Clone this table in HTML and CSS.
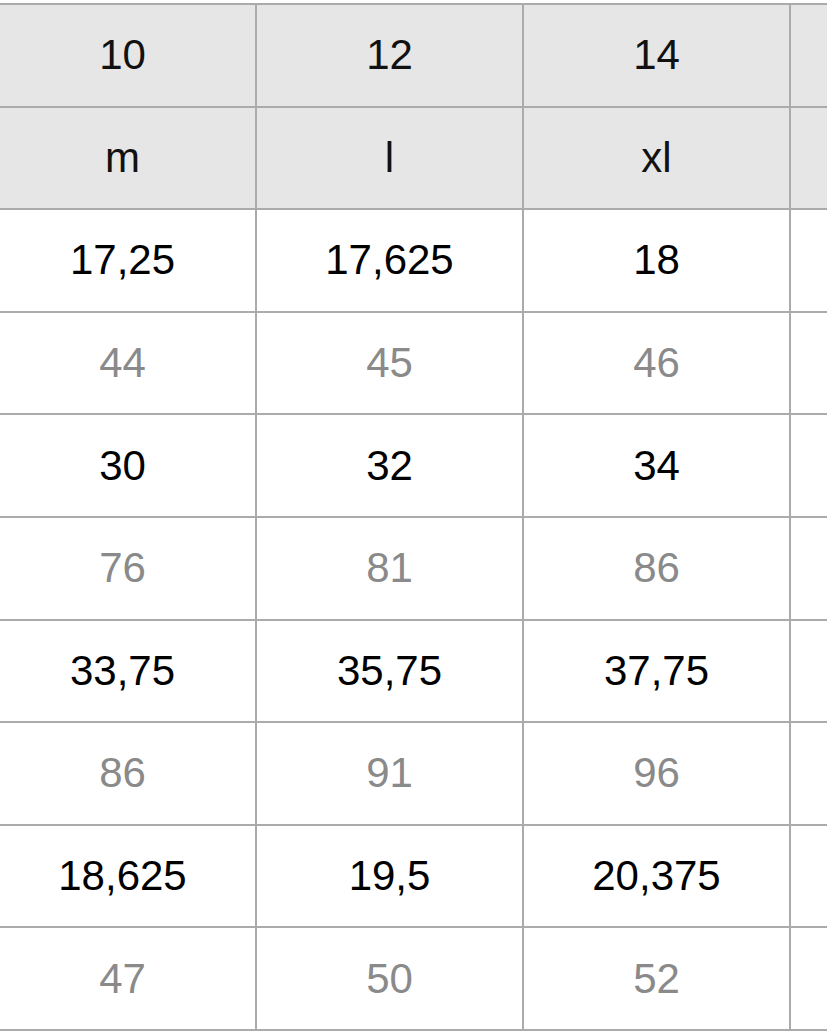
FILE: index.html
```html
<!DOCTYPE html>
<html>
<head>
<meta charset="utf-8">
<link rel="stylesheet" href="styles.css">
</head>
<body>
<table class="size-table">
  <thead>
    <tr><th>10</th><th>12</th><th>14</th><th></th></tr>
    <tr><th>m</th><th>l</th><th>xl</th><th></th></tr>
  </thead>
  <tbody>
    <tr class="dark"><td>17,25</td><td>17,625</td><td>18</td><td></td></tr>
    <tr class="light"><td>44</td><td>45</td><td>46</td><td></td></tr>
    <tr class="dark"><td>30</td><td>32</td><td>34</td><td></td></tr>
    <tr class="light"><td>76</td><td>81</td><td>86</td><td></td></tr>
    <tr class="dark"><td>33,75</td><td>35,75</td><td>37,75</td><td></td></tr>
    <tr class="light"><td>86</td><td>91</td><td>96</td><td></td></tr>
    <tr class="dark"><td>18,625</td><td>19,5</td><td>20,375</td><td></td></tr>
    <tr class="light"><td>47</td><td>50</td><td>52</td><td></td></tr>
  </tbody>
</table>
</body>
</html>
```
FILE: styles.css
```css
html, body {
  margin: 0;
  padding: 0;
  background: #ffffff;
  overflow: hidden;
}

.size-table {
  margin: 3px 0 0 -12px;
  border-collapse: collapse;
  table-layout: fixed;
  width: 1068px;
  font-family: "Liberation Sans", Arial, Helvetica, sans-serif;
  font-size: 42px;
}

.size-table th,
.size-table td {
  width: 265px;
  height: 100.6px;
  padding: 0;
  border: 2px solid #ababab;
  text-align: center;
  vertical-align: middle;
  font-weight: normal;
}

.size-table th {
  background: #e6e6e6;
  color: #111111;
}

.size-table .dark td {
  color: #000000;
}

.size-table .light td {
  color: #8a8a8a;
}
```
